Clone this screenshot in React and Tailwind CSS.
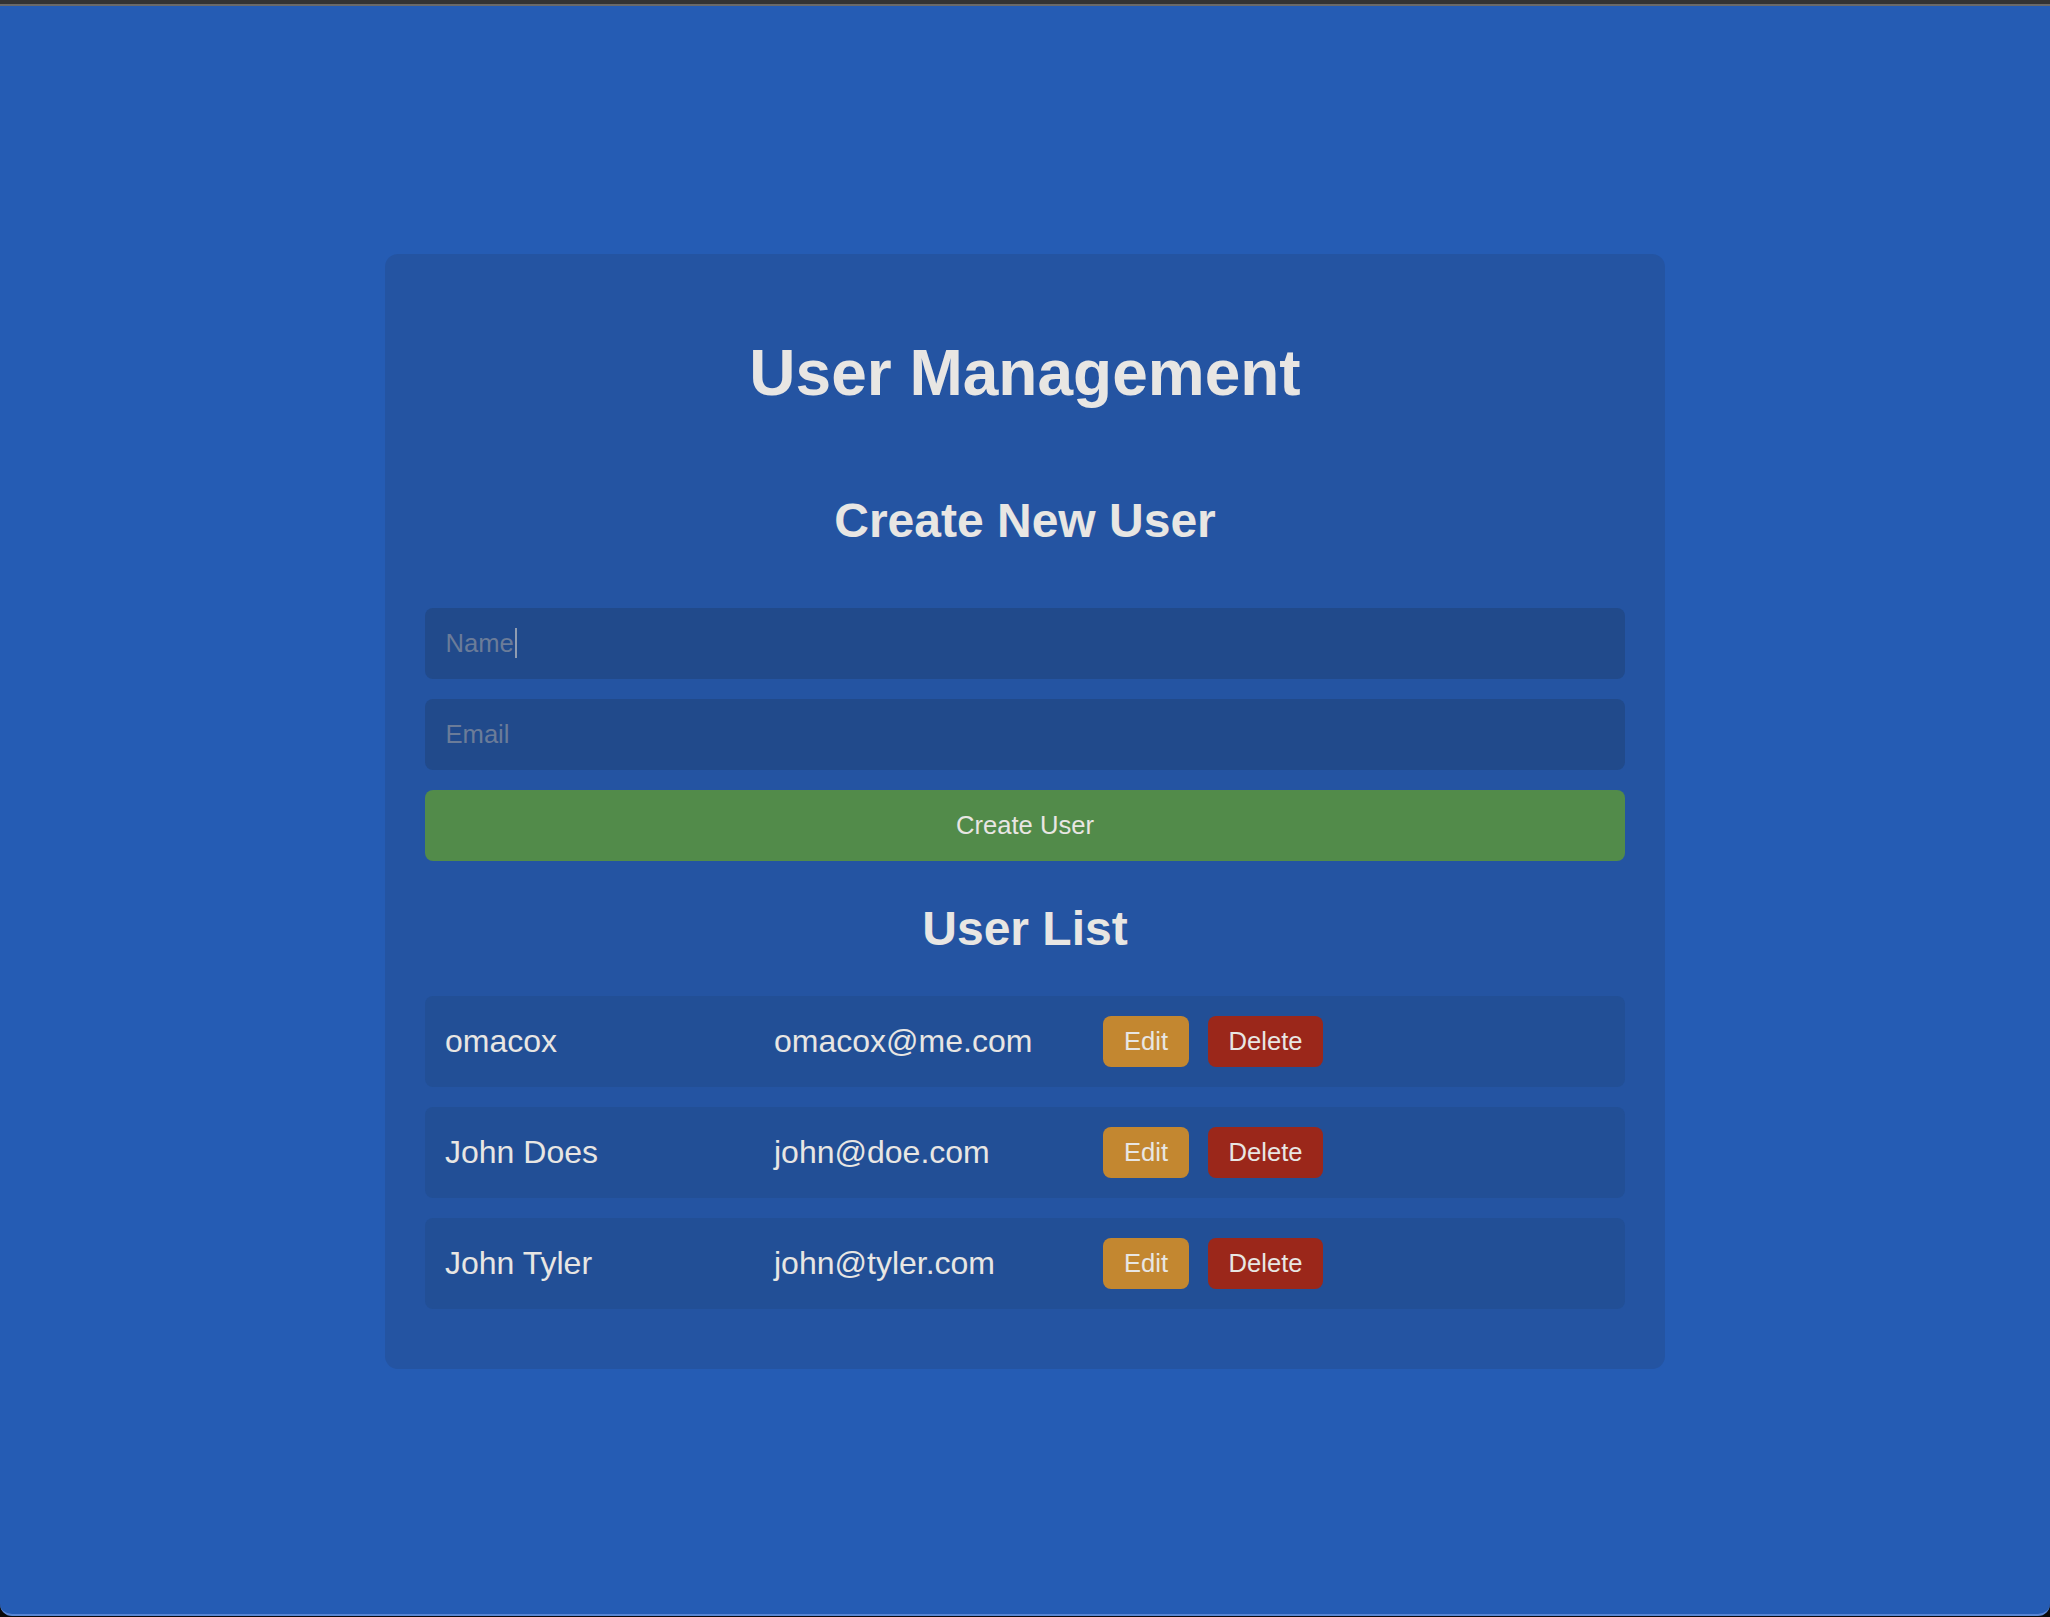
import { useState } from "react";

const initialUsers = [
  { id: 1, name: "omacox", email: "omacox@me.com" },
  { id: 2, name: "John Does", email: "john@doe.com" },
  { id: 3, name: "John Tyler", email: "john@tyler.com" },
];

export default function App() {
  const [users, setUsers] = useState(initialUsers);
  const [name, setName] = useState("");
  const [email, setEmail] = useState("");

  const handleCreate = (e) => {
    e.preventDefault();
    if (!name || !email) return;
    setUsers([...users, { id: Date.now(), name, email }]);
    setName("");
    setEmail("");
  };

  const handleDelete = (id) => {
    setUsers(users.filter((u) => u.id !== id));
  };

  return (
    <div className="h-[1617px] flex flex-col bg-[#0a0a0a] font-['Liberation_Sans',Arial,sans-serif]">
      {/* window chrome */}
      <div className="h-[4px] bg-[#333333]" />
      <div className="h-[2px] bg-[#696969]" />

      <div className="flex-1 flex items-center justify-center pt-[3px] mb-[1px] bg-[#255cb4] rounded-b-[12px] border-b-2 border-[#5886d4]">
        <div className="w-[1280px] bg-[#2454a2] rounded-[13px] px-[40px] pt-[82px] pb-[60px] text-[#e8e6e3]">
          <h1 className="text-center font-bold text-[64px] leading-[74px]">User Management</h1>

          <h2 className="mt-[83px] text-center font-bold text-[48px] leading-[55px]">Create New User</h2>

          <form onSubmit={handleCreate} className="mt-[60px] flex flex-col gap-[20px]">
            <div className="relative">
              <input
                type="text"
                placeholder="Name"
                value={name}
                onChange={(e) => setName(e.target.value)}
                className="w-full h-[71px] px-[20.5px] rounded-[8px] bg-[#214a8b] text-[25.6px] text-[#e8e6e3] placeholder:text-[#6b7c99] outline-none"
              />
              {!name && <span className="absolute left-[90px] top-[20px] w-[1.5px] h-[30px] bg-[#8f9cb1]" />}
            </div>
            <input
              type="email"
              placeholder="Email"
              value={email}
              onChange={(e) => setEmail(e.target.value)}
              className="w-full h-[71px] px-[20.5px] rounded-[8px] bg-[#214a8b] text-[25.6px] text-[#e8e6e3] placeholder:text-[#6b7c99] outline-none"
            />
            <button
              type="submit"
              className="w-full h-[71px] rounded-[8px] bg-[#528b4a] text-[25.6px] text-[#e8e6e3]"
            >
              Create User
            </button>
          </form>

          <h2 className="mt-[40px] text-center font-bold text-[48px] leading-[55px]">User List</h2>

          <ul className="mt-[40px] flex flex-col gap-[20px]">
            {users.map((user) => (
              <li key={user.id} className="flex items-center p-[20px] rounded-[8px] bg-[#224f96]">
                <span className="w-[329px] text-[32px] leading-[37px]">{user.name}</span>
                <span className="w-[329px] text-[32px] leading-[37px]">{user.email}</span>
                <div className="flex gap-[19px]">
                  <button className="h-[51px] px-[21px] rounded-[8px] bg-[#c38730] text-[25.6px] leading-[29px] text-[#e8e6e3]">
                    Edit
                  </button>
                  <button
                    onClick={() => handleDelete(user.id)}
                    className="h-[51px] px-[20.5px] rounded-[8px] bg-[#9b271a] text-[25.6px] leading-[29px] text-[#e8e6e3]"
                  >
                    Delete
                  </button>
                </div>
              </li>
            ))}
          </ul>
        </div>
      </div>
    </div>
  );
}
